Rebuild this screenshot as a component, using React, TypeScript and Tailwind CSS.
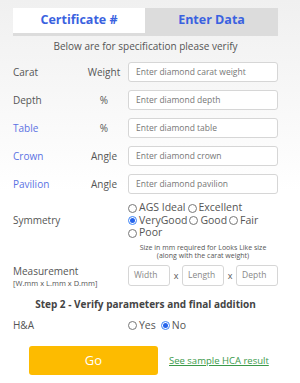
import React from "react"

function Radio({ label, checked }: { label: string; checked?: boolean }) {
  return (
    <span className="inline-flex items-center gap-[2px] mr-[2px]">
      <span
        className={
          "w-[9px] h-[9px] rounded-full border inline-flex items-center justify-center " +
          (checked ? "border-[#3b82f6]" : "border-[#777]")
        }
      >
        {checked && <span className="w-[5px] h-[5px] rounded-full bg-[#2563eb]" />}
      </span>
      <span>{label}</span>
    </span>
  )
}

function Row({ label, unit, placeholder, blue }: { label: string; unit: string; placeholder: string; blue?: boolean }) {
  return (
    <div className="flex items-center h-[20px] mb-[8px]">
      <div className={"w-[70px] " + (blue ? "text-[#5b72e3]" : "text-[#555]")}>{label}</div>
      <div className="w-[42px] text-center text-[#555]">{unit}</div>
      <div className="ml-[3px] w-[150px] h-[20px] border border-[#d6d6d6] rounded-[3px] bg-white flex items-center px-[7px] text-[8.5px] text-[#777]">
        {placeholder}
      </div>
    </div>
  )
}

function SmallInput({ placeholder }: { placeholder: string }) {
  return (
    <div className="w-[42px] h-[21px] border border-[#d6d6d6] rounded-[3px] bg-white flex items-center px-[5px] text-[8.5px] text-[#888]">
      {placeholder}
    </div>
  )
}

export default function App() {
  return (
    <div
      className="w-[300px] h-[383px] overflow-hidden bg-gradient-to-b from-[#f0f0f0] via-white to-white text-[10px] text-[#555]"
      style={{ fontFamily: '"Open Sans", "Liberation Sans", sans-serif' }}
    >
      <div className="pt-[8px] pl-[13px] w-[278px]">
        <div className="flex h-[28px] bg-[#dcdcdc]">
          <div className="w-[132px] h-[25px] bg-white flex items-center justify-center text-[12.5px] font-bold text-[#3a62e0]">
            Certificate #
          </div>
          <div className="flex-1 h-[25px] flex items-center justify-center text-[12.5px] font-bold text-[#3a62e0]">
            Enter Data
          </div>
        </div>
        <div className="text-center text-[10px] text-[#555] mt-[3px] mb-[8px]">
          Below are for specification please verify
        </div>

        <Row label="Carat" unit="Weight" placeholder="Enter diamond carat weight" />
        <Row label="Depth" unit="%" placeholder="Enter diamond depth" />
        <Row label="Table" unit="%" placeholder="Enter diamond table" blue />
        <Row label="Crown" unit="Angle" placeholder="Enter diamond crown" blue />
        <Row label="Pavilion" unit="Angle" placeholder="Enter diamond pavilion" blue />

        <div className="flex items-center mt-[1px]">
          <div className="w-[115px]">Symmetry</div>
          <div className="w-[150px] text-[10.5px] text-[#555]">
            <div className="flex h-[12.5px] items-center"><Radio label="AGS Ideal" /><Radio label="Excellent" /></div>
            <div className="flex h-[12.5px] items-center"><Radio label="VeryGood" checked /><Radio label="Good" /><Radio label="Fair" /></div>
            <div className="flex h-[12.5px] items-center"><Radio label="Poor" /></div>
          </div>
        </div>

        <div className="flex mt-[4px]">
          <div className="w-[115px]" />
          <div className="w-[150px] text-center text-[7px] leading-[8.5px] text-[#555]">
            Size in mm required for Looks Like size<br />(along with the carat weight)
          </div>
        </div>

        <div className="flex mt-[3px]">
          <div className="w-[115px]">
            <div className="leading-[13px] mt-[1px]">Measurement</div>
            <div className="text-[7.5px] leading-[10px]">[W.mm x L.mm x D.mm]</div>
          </div>
          <div className="flex items-center w-[150px]">
            <SmallInput placeholder="Width" />
            <span className="w-[12px] text-center text-[9px]">x</span>
            <SmallInput placeholder="Length" />
            <span className="w-[12px] text-center text-[9px]">x</span>
            <SmallInput placeholder="Depth" />
          </div>
        </div>

        <div className="text-center font-bold text-[10px] text-[#444] mt-[9px]">
          Step 2 - Verify parameters and final addition
        </div>

        <div className="flex items-center mt-[6px]">
          <div className="w-[115px]">H&amp;A</div>
          <div className="flex gap-[3px] text-[10.5px]">
            <Radio label="Yes" /><Radio label="No" checked />
          </div>
        </div>

        <div className="flex items-center mt-[13px] pl-[16px]">
          <button className="w-[129px] h-[29px] rounded-[3px] bg-[#fdbb00] text-white text-[13px]">Go</button>
          <a href="#" className="ml-[11px] whitespace-nowrap text-[9.5px] text-[#3a9a4a] underline">See sample HCA result</a>
        </div>
      </div>
    </div>
  )
}
